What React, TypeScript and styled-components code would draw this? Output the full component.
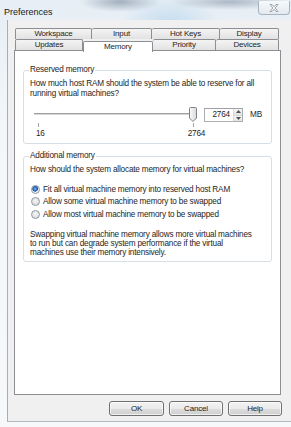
import styled, {createGlobalStyle} from 'styled-components';

const GlobalStyle = createGlobalStyle`
    html, body {
        margin: 0;
        padding: 0;
    }
    body {
        font-family: "Liberation Sans", Arial, sans-serif;
        font-size: 8.2px;
        letter-spacing: -0.18px;
        color: #1e1e1e;
    }
`;

const Page = styled.div`
    width: 291px;
    height: 427px;
    overflow: hidden;
    display: flex;
    flex-direction: column;
    white-space: nowrap;
    background:
        radial-gradient(ellipse 40px 10px at 120px 2px, rgba(40, 60, 90, 0.35), transparent),
        radial-gradient(ellipse 60px 8px at 230px 2px, rgba(40, 60, 90, 0.3), transparent),
        radial-gradient(ellipse 50px 30px at 170px 25px, rgba(160, 200, 230, 0.5), transparent),
        linear-gradient(#e6eef5, #f3f7fa 30%, #f6f8fa);
`;

const TitleBar = styled.div`
    height: 20px;
    display: flex;
    justify-content: space-between;
    align-items: flex-start;
    padding-left: 4px;
    padding-right: 1px;
`;

const Title = styled.span`
    font-size: 9px;
    letter-spacing: 0;
    line-height: 9px;
    margin-top: 8px;
    color: #202020;
`;

const CloseButton = styled.div`
    width: 32px;
    height: 14px;
    margin-top: 1px;
    box-sizing: border-box;
    border: 1px solid #a7b3bf;
    border-top: none;
    border-radius: 0 0 4px 4px;
    background: linear-gradient(#f7f9fb, #e4e9ee);
    display: flex;
    align-items: center;
    justify-content: center;
`;

const WindowBody = styled.div`
    margin-left: 7px;
    height: 402px;
    box-sizing: border-box;
    background: #f0f0f0;
    border-left: 1px solid #a6aeb6;
    border-bottom: 1px solid #b4b8bc;
    padding: 8px 10px 0 6px;
    display: flex;
    flex-direction: column;
`;

const TabRow = styled.div`
    display: flex;
    height: 11px;
    margin: 0 2px 0 1px;
`;

const Tab = styled.div<{w: number; selected?: boolean}>`
    width: ${(p) => p.w}px;
    box-sizing: border-box;
    border: 1px solid #8c8e94;
    border-left-width: 0;
    &:first-child {
        border-left-width: 1px;
    }
    border-bottom: none;
    border-radius: 2px 2px 0 0;
    background: ${(p) => (p.selected ? '#ffffff' : 'linear-gradient(#f4f4f4, #e2e2e2)')};
    display: flex;
    align-items: center;
    justify-content: center;
    font-size: 8px;
    line-height: 10px;
    color: #1e1e1e;
    position: relative;
    ${(p) =>
        p.selected &&
        `
        margin-top: 2px;
        height: 11px;
        border-left-width: 1px;
        z-index: 1;
    `}
`;

const Panel = styled.div`
    height: 345px;
    box-sizing: border-box;
    background: #ffffff;
    border: 1px solid #8c8e94;
    padding: 19px 8px 0 8px;
    display: flex;
    flex-direction: column;
`;

const Group = styled.div<{gap?: number}>`
    position: relative;
    border: 1px solid #d5dfe5;
    border-radius: 3px;
    margin-top: ${(p) => p.gap ?? 0}px;
    padding: 8px 6px 4px 6px;
`;

const Legend = styled.span`
    position: absolute;
    top: -6px;
    left: 5px;
    padding: 0 1px;
    background: #ffffff;
    line-height: 10px;
`;

const Text = styled.div<{lh?: number}>`
    line-height: ${(p) => p.lh ?? 10}px;
`;

const SliderRow = styled.div`
    display: flex;
    align-items: flex-start;
    margin-top: 8px;
    height: 15px;
`;

const Slider = styled.div`
    position: relative;
    width: 167px;
    height: 15px;
`;

const Track = styled.div`
    position: absolute;
    left: 4px;
    right: 4px;
    top: 6px;
    height: 2px;
    background: #d6d6d6;
    border-top: 1px solid #a0a0a0;
    box-sizing: border-box;
`;

const Thumb = styled.svg`
    position: absolute;
    left: 159px;
    top: 0;
`;

const Spin = styled.div`
    margin-left: 7px;
    margin-top: 1px;
    width: 39px;
    height: 14px;
    box-sizing: border-box;
    border: 1px solid #abadb3;
    border-top-color: #9ea1a8;
    display: flex;
    background: #fff;
`;

const SpinValue = styled.div`
    flex: 1;
    text-align: right;
    padding-right: 3px;
    line-height: 12px;
`;

const SpinArrows = styled.div`
    width: 8px;
    display: flex;
    flex-direction: column;
    border-left: 1px solid #d8d8d8;
`;

const SpinArrow = styled.div`
    flex: 1;
    display: flex;
    align-items: center;
    justify-content: center;
    background: linear-gradient(#f6f6f6, #e3e3e3);
    border-bottom: 1px solid #d8d8d8;
    &:last-child {
        border-bottom: none;
    }
`;

const Unit = styled.span`
    margin-left: 7px;
    line-height: 15px;
`;

const TickRow = styled.div`
    position: relative;
    height: 5px;
    width: 167px;
`;

const Tick = styled.div<{at: number}>`
    position: absolute;
    left: ${(p) => p.at}px;
    top: 1px;
    width: 1px;
    height: 4px;
    background: #a8a8a8;
`;

const ScaleLabels = styled.div`
    display: flex;
    line-height: 10px;
    margin-top: 2px;
    padding-left: 6px;
`;

const ScaleMax = styled.span`
    margin-left: 143px;
`;

const RadioList = styled.div`
    margin-top: 8px;
    display: flex;
    flex-direction: column;
`;

const RadioItem = styled.label`
    display: flex;
    align-items: center;
    height: 12.5px;
    gap: 3px;
    padding-left: 1px;
`;

const RadioDot = styled.span<{checked?: boolean}>`
    width: 9px;
    height: 9px;
    box-sizing: border-box;
    border-radius: 50%;
    border: 1px solid #8f9aa4;
    background: ${(p) =>
        p.checked
            ? 'radial-gradient(circle at 45% 40%, #7fc3ff 0, #2a6ebd 1.8px, #1d4f9b 2.6px, #e6ecf2 3px, #f4f6f8 4.5px)'
            : 'radial-gradient(circle at 50% 40%, #f6f6f6 0, #dcdcdc 4px)'};
    flex-shrink: 0;
`;

const Note = styled(Text)`
    margin-top: 9px;
`;

const ButtonBar = styled.div`
    display: flex;
    justify-content: flex-end;
    gap: 5px;
    margin-top: 6px;
    margin-right: -1px;
`;

const Button = styled.button<{w: number}>`
    width: ${(p) => p.w}px;
    height: 15px;
    padding: 0;
    border: 1px solid #707070;
    border-radius: 3px;
    background: linear-gradient(#f2f2f2 0%, #ebebeb 50%, #dddddd 51%, #cfcfcf 100%);
    box-shadow: inset 0 0 0 1px rgba(255, 255, 255, 0.7);
    font-family: inherit;
    font-size: 8px;
    letter-spacing: inherit;
    color: #1e1e1e;
`;

const topTabs = [
    {label: 'Workspace', w: 77},
    {label: 'Input', w: 60},
    {label: 'Hot Keys', w: 68},
    {label: 'Display', w: 59},
];

const bottomTabs = [
    {label: 'Updates', w: 68},
    {label: 'Memory', w: 70, selected: true},
    {label: 'Priority', w: 63},
    {label: 'Devices', w: 63},
];

const options = [
    'Fit all virtual machine memory into reserved host RAM',
    'Allow some virtual machine memory to be swapped',
    'Allow most virtual machine memory to be swapped',
];

function App() {
    return (
        <Page>
            <GlobalStyle />
            <TitleBar>
                <Title>Preferences</Title>
                <CloseButton>
                    <svg width="10" height="8" viewBox="0 0 10 8">
                        <path
                            d="M1 0.5 L3 0.5 L5 2.6 L7 0.5 L9 0.5 L6.2 4 L9 7.5 L7 7.5 L5 5.4 L3 7.5 L1 7.5 L3.8 4 Z"
                            fill="#f2f4f6"
                            stroke="#8a939c"
                            strokeWidth="0.8"
                        />
                    </svg>
                </CloseButton>
            </TitleBar>
            <WindowBody>
                <TabRow>
                    {topTabs.map((t) => (
                        <Tab key={t.label} w={t.w}>{t.label}</Tab>
                    ))}
                </TabRow>
                <TabRow>
                    {bottomTabs.map((t) => (
                        <Tab key={t.label} w={t.w} selected={t.selected}>{t.label}</Tab>
                    ))}
                </TabRow>
                <Panel>
                    <Group>
                        <Legend>Reserved memory</Legend>
                        <Text>
                            How much host RAM should the system be able to reserve for all
                            <br />
                            running virtual machines?
                        </Text>
                        <SliderRow>
                            <Slider>
                                <Track />
                                <Thumb width="8" height="15" viewBox="0 0 8 15">
                                    <defs>
                                        <linearGradient id="thumbFill" x1="0" y1="0" x2="1" y2="0">
                                            <stop offset="0" stopColor="#fbfbfb" />
                                            <stop offset="1" stopColor="#d9d9d9" />
                                        </linearGradient>
                                    </defs>
                                    <path
                                        d="M1.5 0.5 H6.5 Q7.5 0.5 7.5 1.5 V11 L4 14.5 L0.5 11 V1.5 Q0.5 0.5 1.5 0.5 Z"
                                        fill="url(#thumbFill)"
                                        stroke="#7d8288"
                                        strokeWidth="1"
                                    />
                                </Thumb>
                            </Slider>
                            <Spin>
                                <SpinValue>2764</SpinValue>
                                <SpinArrows>
                                    <SpinArrow>
                                        <svg width="5" height="3" viewBox="0 0 5 3">
                                            <path d="M0 3 L2.5 0 L5 3 Z" fill="#4d5358" />
                                        </svg>
                                    </SpinArrow>
                                    <SpinArrow>
                                        <svg width="5" height="3" viewBox="0 0 5 3">
                                            <path d="M0 0 L2.5 3 L5 0 Z" fill="#4d5358" />
                                        </svg>
                                    </SpinArrow>
                                </SpinArrows>
                            </Spin>
                            <Unit>MB</Unit>
                        </SliderRow>
                        <TickRow>
                            <Tick at={8} />
                            <Tick at={163} />
                        </TickRow>
                        <ScaleLabels>
                            <span>16</span>
                            <ScaleMax>2764</ScaleMax>
                        </ScaleLabels>
                    </Group>
                    <Group gap={12}>
                        <Legend>Additional memory</Legend>
                        <Text>How should the system allocate memory for virtual machines?</Text>
                        <RadioList>
                            {options.map((o, i) => (
                                <RadioItem key={o}>
                                    <RadioDot checked={i === 0} />
                                    <span>{o}</span>
                                </RadioItem>
                            ))}
                        </RadioList>
                        <Note lh={9.3}>
                            Swapping virtual machine memory allows more virtual machines
                            <br />
                            to run but can degrade system performance if the virtual
                            <br />
                            machines use their memory intensively.
                        </Note>
                    </Group>
                </Panel>
                <ButtonBar>
                    <Button w={55}>OK</Button>
                    <Button w={54}>Cancel</Button>
                    <Button w={54}>Help</Button>
                </ButtonBar>
            </WindowBody>
        </Page>
    );
}

export default App;
